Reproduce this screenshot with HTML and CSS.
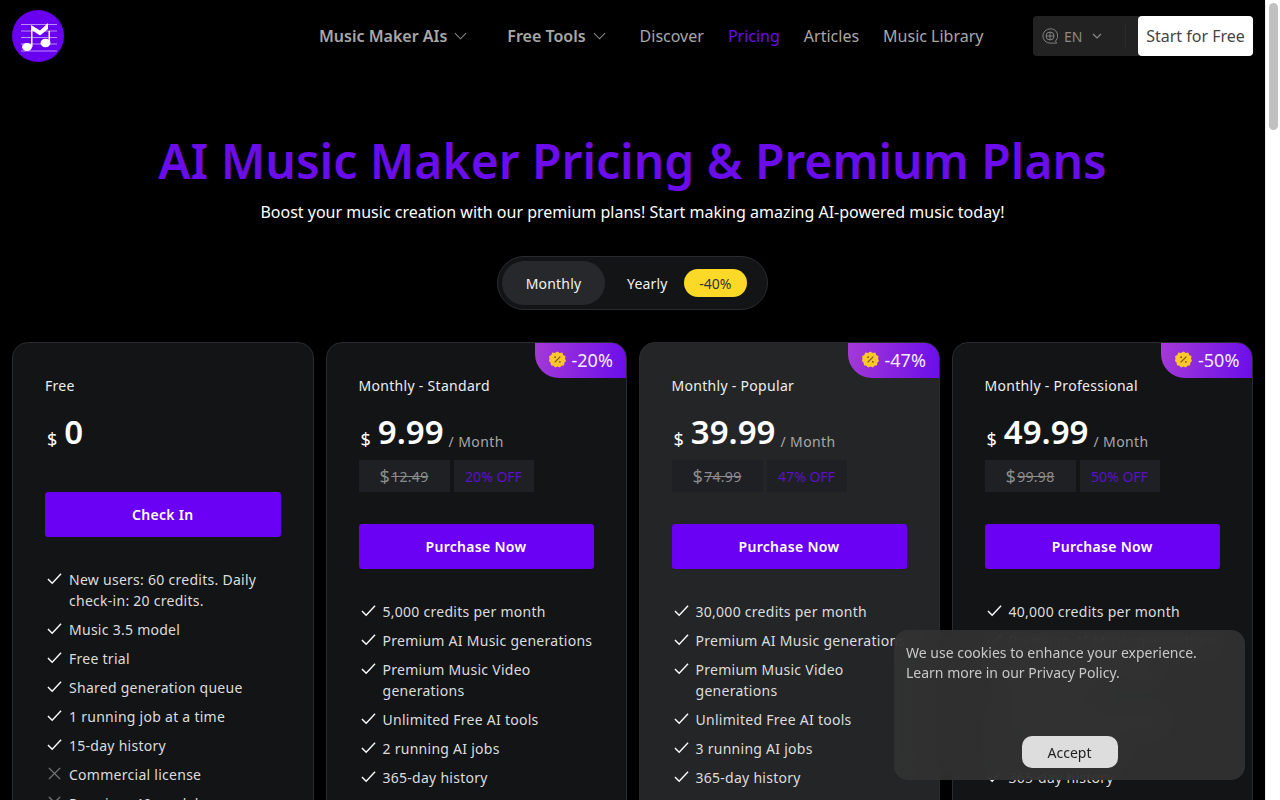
FILE: index.html
```html
<!DOCTYPE html>
<html lang="en">
<head>
<meta charset="utf-8">
<title>AI Music Maker Pricing</title>
<link rel="stylesheet" href="styles.css">
</head>
<body>
<div class="app">
<main class="page">
  <header class="topbar">
    <a class="logo" aria-label="Music Maker">
      <svg viewBox="0 0 52 52" width="52" height="52">
        <circle cx="26" cy="26" r="26" fill="#6a00f0"/>
        <path d="M9 14.500H45M9 21H45M9 27.500H45M9 34H45M9 41H45" stroke="#b98cf8" stroke-width="1"/>
        <path d="M19 15 28 20.500 36 13V19L28 25.500 20.500 20.500V37H19Z" fill="#fff"/>
        <path d="M36.500 21H38V33H36.500Z" fill="#fff"/>
        <ellipse cx="15" cy="37" rx="5" ry="4" fill="#fff"/>
        <ellipse cx="33.500" cy="33" rx="5" ry="4.200" fill="#fff"/>
      </svg>
    </a>
    <nav class="nav">
      <a class="nav-item strong">Music Maker AIs <svg class="chev" viewBox="0 0 14 8" width="13" height="8"><path d="M1 1l6 6 6-6" fill="none" stroke="currentColor" stroke-width="1.100"/></svg></a>
      <a class="nav-item strong second">Free Tools <svg class="chev" viewBox="0 0 14 8" width="13" height="8"><path d="M1 1l6 6 6-6" fill="none" stroke="currentColor" stroke-width="1.100"/></svg></a>
      <a class="nav-item">Discover</a>
      <a class="nav-item active">Pricing</a>
      <a class="nav-item">Articles</a>
      <a class="nav-item">Music Library</a>
    </nav>
    <div class="actions">
      <div class="lang">
        <svg viewBox="0 0 18 18" width="16" height="16" fill="none" stroke="#8a8a8a" stroke-width="1"><path d="M9 1a8 8 0 1 0 0 16h7.500l-1.300-2.200A8 8 0 0 0 9 1Z"/><circle cx="9" cy="9" r="4.500"/><path d="M4.500 9h9M9 4.500v9"/></svg>
        <span>EN</span>
        <svg class="lang-chev" viewBox="0 0 10 6" width="10" height="6"><path d="M1 1l4 4 4-4" fill="none" stroke="#8a8a8a" stroke-width="1.200"/></svg>
        <i class="lang-sep"></i>
      </div>
      <a class="start">Start for Free</a>
    </div>
  </header>

  <section class="hero">
    <h1>AI Music Maker Pricing &amp; Premium Plans</h1>
    <p>Boost your music creation with our premium plans! Start making amazing AI-powered music today!</p>
    <div class="toggle">
      <span class="opt on">Monthly</span>
      <span class="opt">Yearly</span>
      <span class="off-badge">-40%</span>
    </div>
  </section>

  <section class="plans">
    <article class="card free">
      <h2>Free</h2>
      <div class="price"><span class="cur">$</span><b>0</b></div>
      <a class="buy">Check In</a>
      <ul class="feat">
        <li><svg class="ic" viewBox="0 0 16 16"><use href="#tick"/></svg>New users: 60 credits. Daily check-in: 20 credits.</li>
        <li><svg class="ic" viewBox="0 0 16 16"><use href="#tick"/></svg>Music 3.5 model</li>
        <li><svg class="ic" viewBox="0 0 16 16"><use href="#tick"/></svg>Free trial</li>
        <li><svg class="ic" viewBox="0 0 16 16"><use href="#tick"/></svg>Shared generation queue</li>
        <li><svg class="ic" viewBox="0 0 16 16"><use href="#tick"/></svg>1 running job at a time</li>
        <li><svg class="ic" viewBox="0 0 16 16"><use href="#tick"/></svg>15-day history</li>
        <li><svg class="ic" viewBox="0 0 16 16"><use href="#cross"/></svg>Commercial license</li>
        <li><svg class="ic" viewBox="0 0 16 16"><use href="#cross"/></svg>Premium 40 model</li>
      </ul>
    </article>

    <article class="card">
      <div class="ribbon"><svg viewBox="0 0 18 18" width="17" height="17"><use href="#seal"/></svg>-20%</div>
      <h2>Monthly - Standard</h2>
      <div class="price"><span class="cur">$</span><b>9.99</b><span class="per">/ Month</span></div>
      <div class="chips"><span class="chip was"><i>$</i><s>12.49</s></span><span class="chip pct">20% OFF</span></div>
      <a class="buy">Purchase Now</a>
      <ul class="feat">
        <li><svg class="ic" viewBox="0 0 16 16"><use href="#tick"/></svg>5,000 credits per month</li>
        <li><svg class="ic" viewBox="0 0 16 16"><use href="#tick"/></svg>Premium AI Music generations</li>
        <li><svg class="ic" viewBox="0 0 16 16"><use href="#tick"/></svg>Premium Music Video generations</li>
        <li><svg class="ic" viewBox="0 0 16 16"><use href="#tick"/></svg>Unlimited Free AI tools</li>
        <li><svg class="ic" viewBox="0 0 16 16"><use href="#tick"/></svg>2 running AI jobs</li>
        <li><svg class="ic" viewBox="0 0 16 16"><use href="#tick"/></svg>365-day history</li>
      </ul>
    </article>

    <article class="card popular">
      <div class="ribbon"><svg viewBox="0 0 18 18" width="17" height="17"><use href="#seal"/></svg>-47%</div>
      <h2>Monthly - Popular</h2>
      <div class="price"><span class="cur">$</span><b>39.99</b><span class="per">/ Month</span></div>
      <div class="chips"><span class="chip was"><i>$</i><s>74.99</s></span><span class="chip pct">47% OFF</span></div>
      <a class="buy">Purchase Now</a>
      <ul class="feat">
        <li><svg class="ic" viewBox="0 0 16 16"><use href="#tick"/></svg>30,000 credits per month</li>
        <li><svg class="ic" viewBox="0 0 16 16"><use href="#tick"/></svg>Premium AI Music generations</li>
        <li><svg class="ic" viewBox="0 0 16 16"><use href="#tick"/></svg>Premium Music Video generations</li>
        <li><svg class="ic" viewBox="0 0 16 16"><use href="#tick"/></svg>Unlimited Free AI tools</li>
        <li><svg class="ic" viewBox="0 0 16 16"><use href="#tick"/></svg>3 running AI jobs</li>
        <li><svg class="ic" viewBox="0 0 16 16"><use href="#tick"/></svg>365-day history</li>
      </ul>
    </article>

    <article class="card">
      <div class="ribbon"><svg viewBox="0 0 18 18" width="17" height="17"><use href="#seal"/></svg>-50%</div>
      <h2>Monthly - Professional</h2>
      <div class="price"><span class="cur">$</span><b>49.99</b><span class="per">/ Month</span></div>
      <div class="chips"><span class="chip was"><i>$</i><s>99.98</s></span><span class="chip pct">50% OFF</span></div>
      <a class="buy">Purchase Now</a>
      <ul class="feat">
        <li><svg class="ic" viewBox="0 0 16 16"><use href="#tick"/></svg>40,000 credits per month</li>
        <li><svg class="ic" viewBox="0 0 16 16"><use href="#tick"/></svg>Premium AI Music generations</li>
        <li><svg class="ic" viewBox="0 0 16 16"><use href="#tick"/></svg>Premium Music Video generations</li>
        <li><svg class="ic" viewBox="0 0 16 16"><use href="#tick"/></svg>Unlimited Free AI tools</li>
        <li><svg class="ic" viewBox="0 0 16 16"><use href="#tick"/></svg>5 running AI jobs</li>
        <li><svg class="ic" viewBox="0 0 16 16"><use href="#tick"/></svg>365-day history</li>
      </ul>
    </article>
  </section>
</main>
<aside class="scrollbar"><div class="thumb"></div></aside>
</div>

<div class="cookie">
  <p>We use cookies to enhance your experience. Learn more in our Privacy Policy.</p>
  <a class="accept">Accept</a>
</div>

<svg class="defs" width="0" height="0" aria-hidden="true">
  <symbol id="tick" viewBox="0 0 16 16"><path d="M1 8.500 5.500 13 15 3" fill="none" stroke="#fff" stroke-width="1.500"/></symbol>
  <symbol id="cross" viewBox="0 0 16 16"><path d="M2 2l12 12M14 2L2 14" fill="none" stroke="#777" stroke-width="1.500"/></symbol>
  <symbol id="seal" viewBox="0 0 18 18">
    <path d="M9 .5l2.300 1.500 2.700-.3 1.100 2.500 2.400 1.300-.5 2.700L18 10.500l-1.800 2-.2 2.700-2.700.5L11.500 17.500 9 16.500l-2.500 1-1.800-1.800-2.700-.5-.2-2.700L0 10.500l.5-2.800L0 5.500l2.400-1.300L3.500 1.700l2.700.3Z" fill="#fcc62d"/>
    <path d="M6 12l6-6" stroke="#7a5a10" stroke-width="1.300"/><circle cx="6.500" cy="6.500" r="1" fill="#7a5a10"/><circle cx="11.500" cy="11.500" r="1" fill="#7a5a10"/>
  </symbol>
</svg>
</body>
</html>
```
FILE: styles.css
```css
* { box-sizing: border-box; }
html, body { margin: 0; height: 100%; overflow: hidden; }
body { background: #000; color: #fff; font-family: "Noto Sans", "Open Sans", sans-serif; }
a { text-decoration: none; color: inherit; }
.defs { position: absolute; }

.app { display: flex; height: 800px; }
.page { flex: 1; min-width: 0; height: 800px; overflow: hidden; background: #000; }
.scrollbar { width: 15px; background: #fff; padding: 3px 2px 0 3px; border-left: 1px solid #eee; }
.thumb { height: 127px; border-radius: 5px; background: #c1c1c1; }

.topbar { display: flex; align-items: center; height: 72px; padding: 0 12px; }
.logo { display: block; width: 52px; height: 52px; }
.logo svg { display: block; }
.nav { display: flex; align-items: center; margin-left: 255px; color: #a8a8a8; font-size: 16px; }
.nav-item { display: flex; align-items: center; margin-right: 24px; white-space: nowrap; }
.nav-item.strong { font-weight: 600; margin-right: 40px; }
.nav-item.second { margin-right: 34px; }
.nav-item.active { color: #6a0dea; }
.chev { margin-left: 7px; color: #8c8c8c; }
.actions { display: flex; align-items: center; margin-left: auto; }
.lang { display: flex; align-items: center; width: 106px; height: 40px; padding-left: 9px; background: #222; border-radius: 4px 0 0 4px; color: #8a8a8a; font-size: 14px; }
.lang span { margin-left: 6px; }
.lang-chev { margin-left: 10px; }
.lang-sep { width: 1px; height: 24px; margin: 0 13px 0 auto; background: #2b2b2b; }
.start { display: flex; align-items: center; justify-content: center; width: 115px; height: 40px; margin-left: -1px; background: #fff; color: #444; font-size: 16px; border-radius: 4px; white-space: nowrap; }

.hero { display: flex; flex-direction: column; align-items: center; padding-top: 55px; }
.hero h1 { margin: 0; font-size: 48px; line-height: 68px; font-weight: 600; color: #6a0dea; white-space: nowrap; }
.hero p { margin: 5px 0 0; font-size: 16px; line-height: 24px; color: #fff; }
.toggle { display: flex; align-items: center; width: 271px; height: 54px; margin-top: 32px; padding: 4px; border: 1px solid #2a2b2e; border-radius: 27px; background: #131416; font-size: 14px; color: #f2f2f2; }
.opt { display: flex; align-items: center; justify-content: center; height: 44px; letter-spacing: .2px; }
.opt.on { width: 103px; border-radius: 22px; background: #26282c; }
.opt + .opt { margin-left: 22px; }
.off-badge { display: flex; align-items: center; justify-content: center; width: 63px; height: 28px; margin-left: 16px; border-radius: 14px; background: #fcd926; color: #333; }

.plans { display: grid; grid-template-columns: 301.500px 301px 301px 301.500px; gap: 12px; padding: 32px 12px 0; }
.card { position: relative; height: 700px; padding: 32px; border: 1px solid #2a2b2e; border-radius: 16px; background: #131416; overflow: hidden; }
.card.popular { background: #232527; }
.card h2 { margin: 0; font-size: 14px; line-height: 22px; font-weight: 400; letter-spacing: .3px; color: #eee; }
.price { display: flex; align-items: flex-end; height: 48px; margin-top: 11px; color: #fff; }
.price .cur { font-size: 18px; line-height: 34px; margin: 0 7px 0 2px; }
.price b { font-size: 33px; font-weight: 600; line-height: 48px; }
.price .per { margin-left: 5px; font-size: 14px; line-height: 29px; color: #a8a8a8; letter-spacing: .4px; }
.chips { display: flex; gap: 4px; height: 32px; margin-top: 4px; font-size: 14px; }
.chip { display: flex; align-items: center; justify-content: center; background: #1f2023; }
.chip.was { width: 91px; color: #8c8c8c; letter-spacing: .3px; }
.chip.was i { font-style: normal; font-size: 18px; margin-right: 1px; }
.chip.pct { width: 80px; color: #5a10c8; }
.buy { display: flex; align-items: center; justify-content: center; height: 45px; margin-top: 32px; border-radius: 3px; background: #6a00f4; color: #fff; font-size: 14px; font-weight: 600; letter-spacing: .3px; }
.free .buy { margin-top: 36px; }
.feat { list-style: none; margin: 32px 0 0; padding: 0; font-size: 14px; line-height: 21px; color: #ddd; letter-spacing: .27px; }
.feat li { position: relative; padding-left: 24px; margin-bottom: 8px; }
.ic { position: absolute; left: 2px; top: 2px; width: 15px; height: 15px; }

.ribbon { position: absolute; top: 0; right: 0; display: flex; align-items: center; gap: 6px; width: 91px; height: 35px; padding: 0 0 2px 14px; border-radius: 0 0 0 24px; background: linear-gradient(100deg, #a43ad6, #6a0dea); color: #f4ecff; font-size: 18px; white-space: nowrap; }

.cookie { position: fixed; left: 894px; top: 630px; width: 351px; height: 150px; padding: 13px 12px 12px; border-radius: 14px; background: rgba(50, 50, 50, .92); backdrop-filter: blur(12px); color: #c8c8c8; font-size: 14px; line-height: 20px; display: flex; flex-direction: column; }
.cookie p { margin: 0; }
.accept { display: flex; align-items: center; justify-content: center; width: 96px; height: 32px; margin: auto auto 0; padding-top: 2px; border-radius: 10px; background: #ddd; color: #222; }
```
